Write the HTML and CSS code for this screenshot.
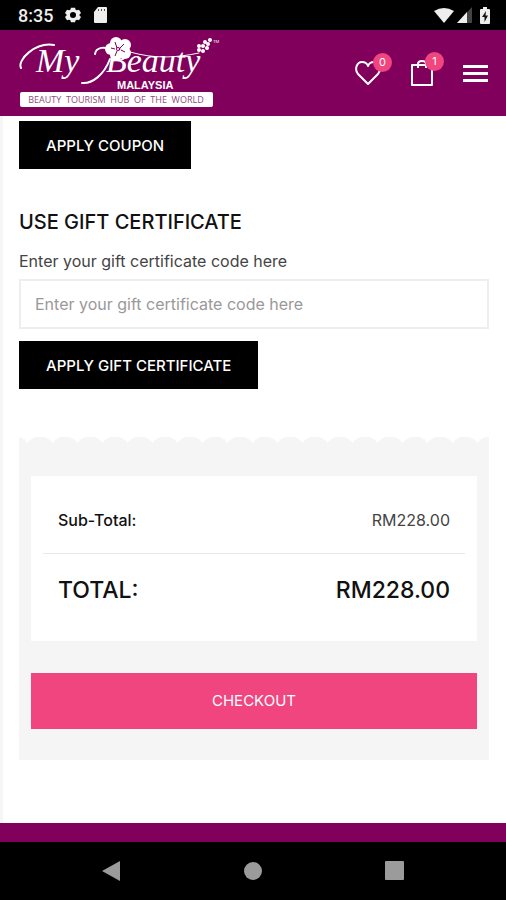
FILE: index.html
```html
<!DOCTYPE html>
<html lang="en">
<head>
    <meta charset="UTF-8">
    <meta name="viewport" content="width=device-width, initial-scale=1.0">
    <title>My Beauty Malaysia</title>
    <link rel="stylesheet" href="styles.css">
</head>
<body>
    <div class="status-bar">
        <span class="time">8:35</span>
        <svg width="16" height="16" viewBox="0 0 24 24" fill="#eee" aria-hidden="true">
            <path fill-rule="evenodd" d="M9 1h6l1 3 2 1 3-1 3 5-2.500 2.500v1L24 15l-3 5-3-1-2 1-1 3H9l-1-3-2-1-3 1-3-5 2.500-2.500v-1L0 9l3-5 3 1 2-1zM12 7.500a4.500 4.500 0 1 0 0 9 4.500 4.500 0 0 0 0-9z"/>
        </svg>
        <svg width="14" height="16" viewBox="0 0 14 16" aria-hidden="true">
            <path fill="#eee" d="M5 0h8q1 0 1 1v14q0 1-1 1H2q-1 0-1-1V5z"/>
            <path stroke="#555" d="M5.500 2v2M8.500 2v2M11.500 2v2"/>
        </svg>
        <div class="status-right">
            <svg width="20" height="15" viewBox="0 0 20 15" aria-hidden="true">
                <path fill="#eee" d="M0 3q10-6 20 0L10 15z"/>
            </svg>
            <svg width="15" height="16" viewBox="0 0 15 16" aria-hidden="true">
                <path fill="#444" d="M15 0v16H0z"/>
                <path fill="#eee" d="M10 5v11H0z"/>
            </svg>
            <svg class="battery" width="10" height="17" viewBox="0 0 10 17" aria-hidden="true">
                <path fill="#eee" d="M3 0h4v2h2q1 0 1 1v13q0 1-1 1H1q-1 0-1-1V3q0-1 1-1h2z"/>
                <path fill="#111" d="M6 4L2 10h2.500v5L8 8.500H5.500z"/>
            </svg>
        </div>
    </div>

    <header class="site-header">
        <a href="#" class="logo" aria-label="My Beauty Malaysia">
            <svg width="204" height="72" viewBox="0 0 204 72">
                <g fill="none" stroke="#fff" stroke-linecap="round">
                    <path stroke-width="2" d="M3 31C-1 23 17 5 36 8"/>
                    <path stroke-width="2" d="M64 46C74 47 86 38 92 22M77 17C78 10 87 9 94 13"/>
                    <path stroke-width="1" d="M112 15C137 22 157 21 181 16"/>
                </g>
                <text class="logo-script" x="18" y="35">My</text>
                <text class="logo-script" x="88" y="35">Beauty</text>
                <g fill="#fff">
                    <circle cx="98" cy="6" r="6"/>
                    <circle cx="107" cy="8" r="6"/>
                    <circle cx="107" cy="16" r="6"/>
                    <circle cx="98" cy="18" r="6"/>
                    <circle cx="93" cy="12" r="6"/>
                </g>
                <path stroke="#80005c" stroke-width="1" fill="none" d="M99 11l-2-6M102 11l4-4M103 13l4 2M99 14l-2 5M97 12l-4-1"/>
                <circle cx="100" cy="12" r="2" fill="#80005c"/>
                <circle cx="100" cy="12" r="1" fill="#fff"/>
                <g fill="#fff">
                    <circle cx="181" cy="13" r="2"/>
                    <circle cx="185" cy="14" r="2"/>
                    <circle cx="181" cy="9" r="2"/>
                    <circle cx="185" cy="9" r="2"/>
                    <circle cx="189" cy="11" r="2"/>
                    <circle cx="187" cy="5" r="2"/>
                    <circle cx="190" cy="7" r="2"/>
                    <circle cx="192" cy="3" r="2"/>
                </g>
                <text class="logo-tm" x="195" y="6">TM</text>
                <text class="logo-country" x="99" y="52">MALAYSIA</text>
                <rect x="2" y="55" width="193" height="15" rx="2" fill="#fff"/>
                <text class="logo-tagline" x="98" y="66">BEAUTY  TOURISM  HUB  OF  THE  WORLD</text>
            </svg>
        </a>
        <nav class="header-links">
            <a href="#" class="header-link" aria-label="Wishlist">
                <svg width="26" height="24" viewBox="0 0 26 24">
                    <path fill="none" stroke="#fff" stroke-width="2" stroke-linejoin="round" d="M13 23L3 13C-1 8 2 1 7 1c3 0 5 1 6 4 1-3 3-4 6-4 5 0 8 7 4 12z"/>
                </svg>
                <span class="badge">0</span>
            </a>
            <a href="#" class="header-link" aria-label="Cart">
                <svg width="22" height="26" viewBox="0 0 22 26">
                    <path fill="none" stroke="#fff" stroke-width="2" stroke-linejoin="round" d="M1 5h20v20H1zM7 8V4q0-3 4-3t4 3v4"/>
                </svg>
                <span class="badge">1</span>
            </a>
            <button type="button" class="menu-button" aria-label="Menu">
                <span></span><span></span><span></span>
            </button>
        </nav>
    </header>

    <main class="content">
        <button type="button" class="button">APPLY COUPON</button>

        <form class="gift-form">
            <h2>USE GIFT CERTIFICATE</h2>
            <label for="giftCode">Enter your gift certificate code here</label>
            <input type="text" id="giftCode" placeholder="Enter your gift certificate code here">
            <button type="button" class="button">APPLY GIFT CERTIFICATE</button>
        </form>

        <section class="summary">
            <div class="totals-card">
                <table class="totals">
                    <tr>
                        <th scope="row">Sub-Total:</th>
                        <td>RM228.00</td>
                    </tr>
                    <tr class="grand-total">
                        <th scope="row">TOTAL:</th>
                        <td>RM228.00</td>
                    </tr>
                </table>
            </div>
            <a href="#" class="checkout">CHECKOUT</a>
        </section>
    </main>

    <footer class="site-footer"></footer>

    <div class="nav-bar">
        <button type="button" aria-label="Back">
            <svg width="20" height="22" viewBox="0 0 20 22"><path fill="#9b9b9b" d="M19 1v20L1 11z"/></svg>
        </button>
        <button type="button" aria-label="Home">
            <svg width="20" height="20" viewBox="0 0 20 20"><circle cx="10" cy="10" r="9" fill="#9b9b9b"/></svg>
        </button>
        <button type="button" aria-label="Recent apps">
            <svg width="20" height="20" viewBox="0 0 20 20"><rect width="19" height="19" rx="1" fill="#9b9b9b"/></svg>
        </button>
    </div>
</body>
</html>
```
FILE: styles.css
```css
* {
    box-sizing: border-box;
}

body {
    margin: 0;
    min-height: 100vh;
    display: flex;
    flex-direction: column;
    font-family: Inter, "Liberation Sans", sans-serif;
    font-size: 16px;
    color: #111;
    background-color: #fff;
}

button {
    font-family: inherit;
    border: none;
    cursor: pointer;
}

.status-bar {
    display: flex;
    align-items: center;
    gap: 12px;
    height: 30px;
    padding: 0 16px 0 18px;
    background-color: #000;
    color: #eee;
}

.time {
    font-family: Roboto, sans-serif;
    font-size: 18px;
    font-weight: 500;
}

.status-right {
    display: flex;
    align-items: center;
    gap: 3px;
    margin-left: auto;
}

.battery {
    margin-left: 5px;
}

.site-header {
    display: flex;
    align-items: center;
    justify-content: space-between;
    height: 86px;
    padding: 0 18px;
    background-color: #80005c;
}

.logo svg,
.header-link svg,
.nav-bar svg {
    display: block;
}

.logo-script {
    font-family: "Liberation Serif", serif;
    font-size: 34px;
    font-style: italic;
    fill: #fff;
}

.logo-country {
    font-family: "Liberation Sans", sans-serif;
    font-size: 11px;
    font-weight: 700;
    fill: #fff;
}

.logo-tagline {
    font-family: "Open Sans", sans-serif;
    font-size: 9px;
    text-anchor: middle;
    white-space: pre;
    fill: #8f4a7c;
}

.logo-tm {
    font-size: 4px;
    fill: #fff;
}

.header-links {
    display: flex;
    align-items: center;
    gap: 30px;
}

.header-link {
    position: relative;
}

.badge {
    position: absolute;
    top: -8px;
    right: -11px;
    width: 19px;
    border-radius: 50%;
    background-color: #f0457f;
    color: #fff;
    font-size: 11px;
    line-height: 19px;
    text-align: center;
}

.menu-button {
    display: flex;
    flex-direction: column;
    gap: 4px;
    padding: 0;
    background: none;
}

.menu-button span {
    width: 25px;
    height: 3px;
    background-color: #fff;
}

.content {
    flex: 1;
    padding: 5px 17px 62px 16px;
    border-left: 3px solid #f6f6f6;
}

.button {
    display: block;
    height: 48px;
    padding: 0 27px;
    background-color: #000;
    color: #fff;
    font-size: 15px;
    font-weight: 500;
}

.gift-form {
    margin-top: 40px;
}

.gift-form h2 {
    margin: 0;
    font-size: 20px;
    font-weight: 500;
    line-height: 26px;
}

.gift-form label {
    display: block;
    margin: 16px 0 8px;
    line-height: 20px;
    color: #444;
}

.gift-form input {
    display: block;
    width: 100%;
    height: 50px;
    margin-bottom: 12px;
    padding: 0 14px;
    border: 2px solid #eee;
    font-family: inherit;
    font-size: 16px;
}

.gift-form input::placeholder {
    color: #999;
}

.summary {
    margin-top: 48px;
    padding: 39px 12px 31px;
    background:
        radial-gradient(circle at 13px 15px, #f5f5f5 15px, transparent 16px) 8px 0 / 25px 8px repeat-x,
        linear-gradient(#f5f5f5, #f5f5f5) 0 8px no-repeat;
}

.totals-card {
    padding: 12px 12px 14px;
    background-color: #fff;
}

.totals {
    width: 100%;
    border-collapse: collapse;
}

.totals th,
.totals td {
    height: 65px;
    padding: 0 15px;
    font-weight: 400;
}

.totals th {
    text-align: left;
    font-weight: 500;
}

.totals td {
    text-align: right;
    color: #444;
}

.totals .grand-total th,
.totals .grand-total td {
    height: 74px;
    border-top: 1px solid #e8e8e8;
    color: #111;
    font-size: 23px;
    font-weight: 500;
}

.checkout {
    display: block;
    margin-top: 32px;
    background-color: #f0457f;
    color: #fff;
    font-size: 15px;
    line-height: 56px;
    text-align: center;
    text-decoration: none;
}

.site-footer {
    height: 19px;
    background-color: #80005c;
}

.nav-bar {
    display: flex;
    align-items: center;
    justify-content: space-between;
    height: 58px;
    padding: 0 20%;
    background-color: #000;
}

.nav-bar button {
    padding: 0;
    background: none;
}
```
